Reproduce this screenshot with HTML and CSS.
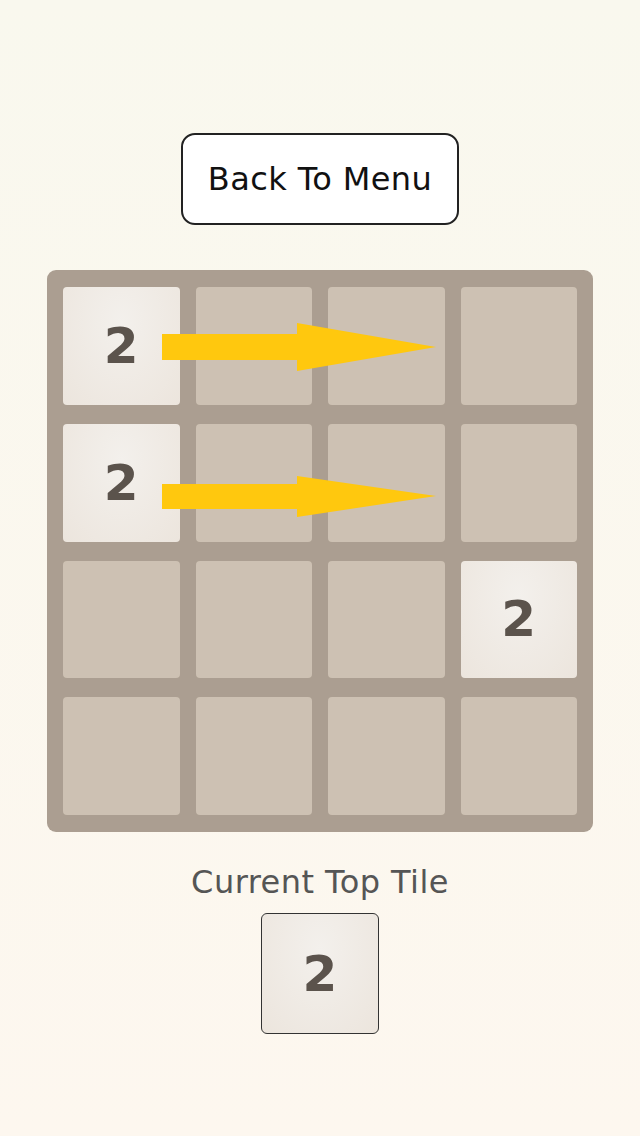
FILE: index.html
```html
<!DOCTYPE html>
<html lang="en">
<head>
  <meta charset="UTF-8">
  <meta name="viewport" content="width=device-width, initial-scale=1.0">
  <title>2048 Tutorial</title>
  <link rel="stylesheet" href="styles.css">
</head>
<body>
  <main class="screen">
    <button class="menu-button">Back To Menu</button>

    <div class="board">
      <div class="cell tile">2</div>
      <div class="cell"></div>
      <div class="cell"></div>
      <div class="cell"></div>

      <div class="cell tile">2</div>
      <div class="cell"></div>
      <div class="cell"></div>
      <div class="cell"></div>

      <div class="cell"></div>
      <div class="cell"></div>
      <div class="cell"></div>
      <div class="cell tile">2</div>

      <div class="cell"></div>
      <div class="cell"></div>
      <div class="cell"></div>
      <div class="cell"></div>

      <!-- swipe hint arrows -->
      <svg class="hints" viewBox="0 0 546 562" width="546" height="562">
        <polygon class="arrow" points="115,64 250,64 250,53 389,77 250,101 250,90 115,90" />
        <polygon class="arrow" points="115,214 250,214 250,206 389,226 250,247 250,239 115,239" />
      </svg>
    </div>

    <p class="top-label">Current Top Tile</p>
    <div class="top-tile">2</div>
  </main>
</body>
</html>
```

FILE: styles.css
```css
:root {
  --board: #ab9e91;
  --cell: #cdc1b3;
  --digit: #5b534c;
  --arrow: #ffc80e;
}

* {
  box-sizing: border-box;
  margin: 0;
  padding: 0;
}

html, body {
  height: 100%;
}

body {
  font-family: "DejaVu Sans", Verdana, sans-serif;
  background: linear-gradient(#f9f8ee, #fdf7ef);
  color: #111;
}

.screen {
  display: flex;
  flex-direction: column;
  align-items: center;
  padding-top: 133px;
}

.menu-button {
  width: 278px;
  height: 92px;
  background: #fff;
  border: 2px solid #222;
  border-radius: 14px;
  font-family: inherit;
  font-size: 32px;
  letter-spacing: 0.4px;
  color: #111;
  cursor: pointer;
}

.board {
  position: relative;
  margin-top: 45px;
  width: 546px;
  height: 562px;
  padding: 17px 16px;
  background: var(--board);
  border-radius: 9px;
  display: grid;
  grid-template-columns: repeat(4, 1fr);
  grid-template-rows: repeat(4, 1fr);
  column-gap: 16px;
  row-gap: 19px;
}

.cell {
  background: var(--cell);
  border-radius: 4px;
}

.tile,
.top-tile {
  display: flex;
  align-items: center;
  justify-content: center;
  background: radial-gradient(ellipse at 50% 30%, #f3f0ec, #ece5dd);
  color: var(--digit);
  font-weight: bold;
  font-size: 50px;
}

.hints {
  position: absolute;
  left: 0;
  top: 0;
  pointer-events: none;
}

.arrow {
  fill: var(--arrow);
}

.top-label {
  margin-top: 31px;
  font-size: 32px;
  line-height: 38px;
  letter-spacing: 0.45px;
  color: #555;
}

.top-tile {
  margin-top: 12px;
  width: 118px;
  height: 121px;
  border: 1px solid #333;
  border-radius: 6px;
}
```
